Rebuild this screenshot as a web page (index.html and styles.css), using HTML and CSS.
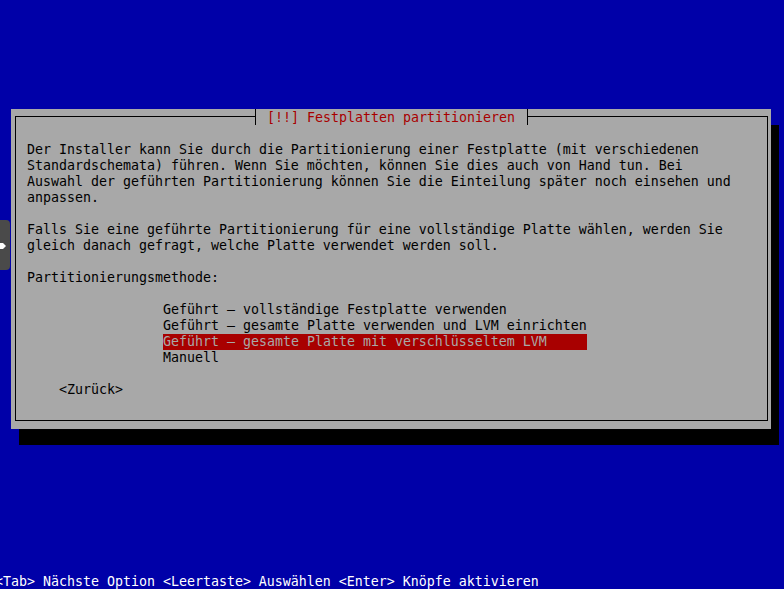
FILE: index.html
```html
<!DOCTYPE html>
<html>
<head>
    <title>Festplatten partitionieren</title>
    <link rel="stylesheet" href="styles.css">
</head>
<body>
    <div class="side-tab">
        <svg class="side-arrow" width="6" height="8" viewBox="0 0 6 8">
            <path d="M0 1 L3 1 L6 4 L3 7 L0 7 Z" fill="#ffffff"/>
        </svg>
    </div>

    <div class="dialog">
        <div class="frame">
            <div class="title">[!!] Festplatten partitionieren</div>

            <p class="text">Der Installer kann Sie durch die Partitionierung einer Festplatte (mit verschiedenen<br>Standardschemata) führen. Wenn Sie möchten, können Sie dies auch von Hand tun. Bei<br>Auswahl der geführten Partitionierung können Sie die Einteilung später noch einsehen und<br>anpassen.</p>

            <p class="text">Falls Sie eine geführte Partitionierung für eine vollständige Platte wählen, werden Sie<br>gleich danach gefragt, welche Platte verwendet werden soll.</p>

            <p class="text">Partitionierungsmethode:</p>

            <ul class="menu">
                <li>Geführt – vollständige Festplatte verwenden</li>
                <li>Geführt – gesamte Platte verwenden und LVM einrichten</li>
                <li class="selected">Geführt – gesamte Platte mit verschlüsseltem LVM</li>
                <li>Manuell</li>
            </ul>

            <div class="back-btn">&lt;Zurück&gt;</div>
        </div>
    </div>

    <div class="help-line">&lt;Tab&gt; Nächste Option &lt;Leertaste&gt; Auswählen &lt;Enter&gt; Knöpfe aktivieren</div>
</body>
</html>
```

FILE: styles.css
```css
* {
    box-sizing: border-box;
}

body {
    margin: 0;
    width: 784px;
    height: 589px;
    overflow: hidden;
    background-color: #0000a8;
    font-family: 'DejaVu Sans Mono', 'Liberation Mono', monospace;
    font-size: 13.29px;
    line-height: 16px;
    color: #000000;
    display: flex;
    flex-direction: column;
    position: relative;
}

.side-tab {
    position: absolute;
    left: 0;
    top: 220px;
    width: 10px;
    height: 50px;
    background-color: #4a4a4a;
    border-radius: 0 4px 4px 0;
}

.side-arrow {
    position: absolute;
    left: 0;
    top: 22px;
}

.dialog {
    margin: 109px 0 0 11px;
    width: 760px;
    height: 320px;
    padding: 7px 3px 8px 4px;
    background-color: #a8a8a8;
    box-shadow: 8px 16px 0 #000000;
}

.frame {
    position: relative;
    height: 100%;
    border: 1px solid #000000;
    padding: 25px 0 0 11px;
}

.title {
    position: absolute;
    left: 239px;
    top: -8px;
    height: 16px;
    padding: 2px 12px 0 11px;
    line-height: 14px;
    background-color: #a8a8a8;
    border-left: 1px solid #000000;
    border-right: 1px solid #000000;
    color: #a80000;
    white-space: pre;
}

.text {
    margin: 0 0 16px 0;
    white-space: nowrap;
}

.menu {
    list-style: none;
    margin: 0 0 16px 136px;
    padding: 0;
    width: 424px;
}

.menu li {
    height: 16px;
    white-space: pre;
}

.menu .selected {
    background-color: #a80000;
    color: #a8a8a8;
}

.back-btn {
    margin-left: 32px;
}

.help-line {
    margin: auto 0 0 -5px;
    height: 16px;
    padding-top: 2px;
    line-height: 14px;
    color: #ffffff;
    white-space: pre;
}
```
